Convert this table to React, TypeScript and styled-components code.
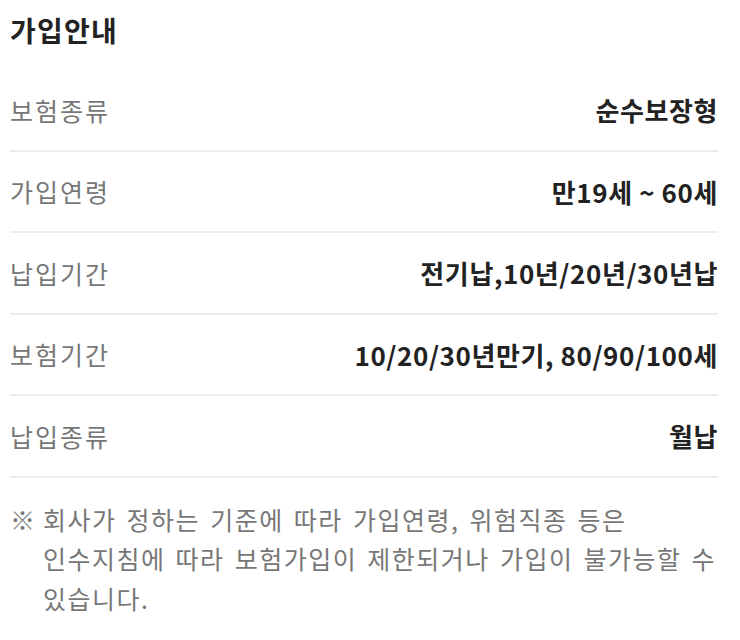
import React from 'react'
import styled, { createGlobalStyle } from 'styled-components'

const GlobalStyle = createGlobalStyle`
  body {
    margin: 0;
    background: #fff;
    font-family: "Noto Sans CJK KR", "Noto Sans", sans-serif;
  }
`

const rows = [
  { label: '보험종류', value: '순수보장형' },
  { label: '가입연령', value: '만19세 ~ 60세' },
  { label: '납입기간', value: '전기납,10년/20년/30년납' },
  { label: '보험기간', value: '10/20/30년만기, 80/90/100세' },
  { label: '납입종류', value: '월납' },
]

const App = () => {
  return (
    <Wrap>
      <GlobalStyle />
      <Title>가입안내</Title>
      <List>
        {rows.map((r) => (
          <Row key={r.label}>
            <Label>{r.label}</Label>
            <Value>{r.value}</Value>
          </Row>
        ))}
      </List>
      <Note>
        <Mark>※</Mark>
        <NoteText>
          회사가 정하는 기준에 따라 가입연령, 위험직종 등은 인수지침에 따라 보험가입이 제한되거나 가입이 불가능할 수 있습니다.
        </NoteText>
      </Note>
    </Wrap>
  )
}

export default App

const Wrap = styled.div`
  width: 708px;
  padding: 10px 0 0 10px;
`
const Title = styled.h2`
  margin: 0 0 20px;
  font-size: 28px;
  font-weight: 700;
  line-height: 40px;
  color: #222;
  letter-spacing: 1.2px;
`
const List = styled.div`
  display: flex;
  flex-direction: column;
`
const Row = styled.div`
  height: 79.5px;
  display: flex;
  align-items: center;
  justify-content: space-between;
  border-bottom: 2px solid #ececec;
`
const Label = styled.span`
  font-size: 25px;
  color: #777;
  letter-spacing: 2px;
`
const Value = styled.span`
  font-size: 26px;
  font-weight: 700;
  color: #222;
  letter-spacing: 0.6px;
`
const Note = styled.div`
  display: flex;
  margin-top: 22px;
  font-size: 25px;
  line-height: 39.5px;
  color: #777;
`
const Mark = styled.span`
  flex: none;
  width: 33px;
  letter-spacing: 0;
`
const NoteText = styled.p`
  margin: 0;
  letter-spacing: 1.5px;
  word-spacing: 3px;
  word-break: keep-all;
`
